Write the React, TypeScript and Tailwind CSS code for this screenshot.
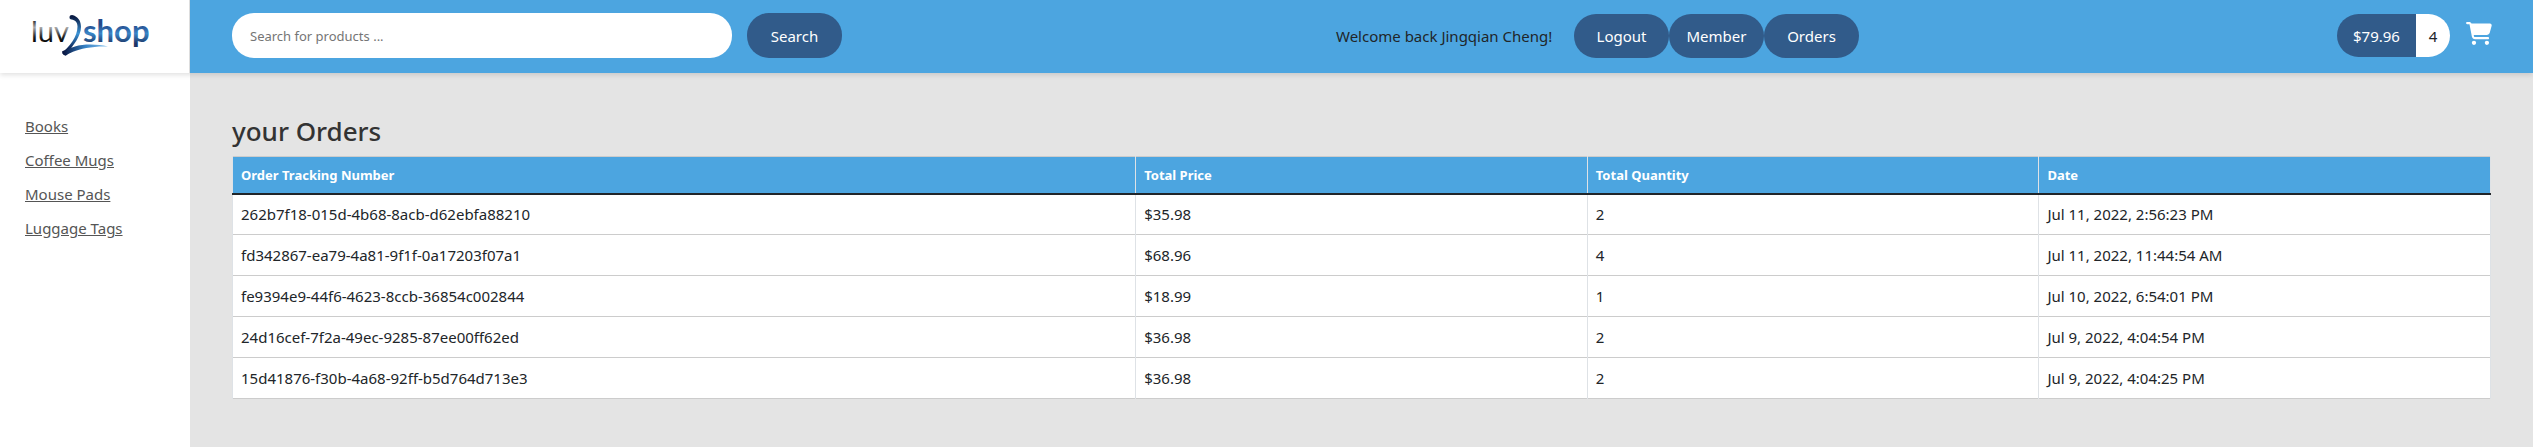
import { FaCartShopping } from "react-icons/fa6";

const categories = ["Books", "Coffee Mugs", "Mouse Pads", "Luggage Tags"];

const orders = [
  { id: "262b7f18-015d-4b68-8acb-d62ebfa88210", price: "$35.98", quantity: 2, date: "Jul 11, 2022, 2:56:23 PM" },
  { id: "fd342867-ea79-4a81-9f1f-0a17203f07a1", price: "$68.96", quantity: 4, date: "Jul 11, 2022, 11:44:54 AM" },
  { id: "fe9394e9-44f6-4623-8ccb-36854c002844", price: "$18.99", quantity: 1, date: "Jul 10, 2022, 6:54:01 PM" },
  { id: "24d16cef-7f2a-49ec-9285-87ee00ff62ed", price: "$36.98", quantity: 2, date: "Jul 9, 2022, 4:04:54 PM" },
  { id: "15d41876-f30b-4a68-92ff-b5d764d713e3", price: "$36.98", quantity: 2, date: "Jul 9, 2022, 4:04:25 PM" },
];

function Logo() {
  return (
    <svg viewBox="-8 0 140 49" className="h-[49px] w-[140px]" role="img" aria-label="luv2shop">
      <defs>
        <linearGradient id="luv" gradientUnits="userSpaceOnUse" x1="0" y1="7" x2="0" y2="31">
          <stop offset="0" stopColor="#111" />
          <stop offset="0.35" stopColor="#aaa" />
          <stop offset="0.75" stopColor="#222" />
          <stop offset="1" stopColor="#000" />
        </linearGradient>
        <linearGradient id="shop" gradientUnits="userSpaceOnUse" x1="0" y1="7" x2="0" y2="36">
          <stop offset="0.2" stopColor="#24498a" />
          <stop offset="0.5" stopColor="#3a86c8" />
          <stop offset="0.85" stopColor="#1d3566" />
        </linearGradient>
        <linearGradient id="two" gradientUnits="userSpaceOnUse" x1="0" y1="3" x2="0" y2="44">
          <stop offset="0.05" stopColor="#0b1c44" />
          <stop offset="0.45" stopColor="#3a93d6" />
          <stop offset="0.85" stopColor="#0a1a4a" />
        </linearGradient>
        <linearGradient id="swoosh" gradientUnits="userSpaceOnUse" x1="29" y1="0" x2="75" y2="0">
          <stop offset="0" stopColor="#06103a" />
          <stop offset="0.5" stopColor="#3580c4" />
          <stop offset="1" stopColor="#8cc6f0" />
        </linearGradient>
      </defs>
      <text x="-2" y="30" fontSize="29" fontFamily="Lato, sans-serif" fontWeight="400" fill="url(#luv)">
        luv
      </text>
      <path
        d="M36.500 5.500C36.500 3 39 2.500 41.500 3.800C46 6 48 10 48 15C48 24 40 34 35 40L31 43L29 41C36 35 44.500 25 44.500 14.500C44.500 10 42 8 38.500 7.500C37 7.300 36.500 6.500 36.500 5.500Z"
        fill="url(#two)"
      />
      <path
        d="M29 39.500C33 37.500 36 36.500 42 34.500C51 31.800 64 32 75 34.500C60 34 48 36.500 40 39.800C37 41 35 42 33 43.500C32 44.500 29.500 42 29 39.500Z"
        fill="url(#swoosh)"
      />
      <text x="50" y="30" fontSize="31" fontFamily="Lato, sans-serif" fontWeight="700" fill="url(#shop)">
        shop
      </text>
    </svg>
  );
}

const pill =
  "flex h-[44px] w-[95px] items-center justify-center rounded-[22px] bg-[#315b8a] text-[15px] text-white no-underline";

export default function App() {
  return (
    <div className="flex min-h-screen flex-col bg-[#e4e4e4] font-['Noto_Sans','Open_Sans',sans-serif] text-[15px] leading-6 text-[#212529]">
      <header className="relative flex h-[73px] shadow-[0_2px_5px_rgba(0,0,0,0.12)]">
        <a
          href="#home"
          className="flex w-[190px] shrink-0 items-center justify-center border-r border-[#ddd] bg-white"
        >
          <Logo />
        </a>
        <div className="flex flex-1 items-center justify-between bg-[#4ca5e0] pr-[41px] pb-0.5 pl-[42px]">
          <form className="flex items-center gap-[15px]" onSubmit={(e) => e.preventDefault()}>
            <input
              type="text"
              aria-label="Search for products"
              placeholder="Search for products ..."
              className="h-[45px] w-[500px] rounded-[22px] bg-white px-[18px] text-[13px] outline-none placeholder:text-[#757575]"
            />
            <button type="submit" className="h-[45px] w-[95px] rounded-[22px] bg-[#315b8a] text-[15px] text-white">
              Search
            </button>
          </form>
          <div className="flex items-center pl-4">
            <span className="w-[238px]">Welcome back Jingqian Cheng!</span>
            <button type="button" className={pill}>
              Logout
            </button>
            <a href="#members" className={pill}>
              Member
            </a>
            <a href="#orders" className={pill}>
              Orders
            </a>
          </div>
          <a href="#cart" aria-label="Shopping cart" className="flex items-center gap-4">
            <span className="flex h-[43px] items-center overflow-hidden rounded-[22px]">
              <span className="flex h-full w-[79px] items-center justify-center bg-[#315b8a] text-white">$79.96</span>
              <span className="flex h-full w-[34px] items-center justify-center bg-white">4</span>
            </span>
            <FaCartShopping className="mb-1 h-[23px] w-[26px] text-white" />
          </a>
        </div>
      </header>

      <div className="flex flex-1">
        <nav aria-label="Categories" className="w-[190px] shrink-0 bg-white pt-[41px] pl-[25px]">
          <ul>
            {categories.map((name) => (
              <li key={name} className="mb-[10px]">
                <a href="#category" className="text-[#555] underline">
                  {name}
                </a>
              </li>
            ))}
          </ul>
        </nav>

        <main className="flex-1 pt-[41px] pr-[42px] pl-[42px]">
          <h2 className="mb-2 text-[26px] leading-[34px] font-medium text-[#333]">your Orders</h2>
          <table className="w-full table-fixed border-collapse bg-white">
            <thead>
              <tr className="h-[37px] border-t border-b-2 border-t-[#ccc] border-b-[#212529] bg-[#4ca5e0] text-left text-[13px] text-white">
                <th className="w-2/5 border-x border-x-[#dee2e6] px-2">Order Tracking Number</th>
                <th className="w-1/5 border-x border-x-[#dee2e6] px-2">Total Price</th>
                <th className="w-1/5 border-x border-x-[#dee2e6] px-2">Total Quantity</th>
                <th className="w-1/5 border-x border-x-[#dee2e6] px-2">Date</th>
              </tr>
            </thead>
            <tbody>
              {orders.map((order) => (
                <tr key={order.id} className="h-[41px] border-b border-b-[#ccc]">
                  <td className="border-x border-x-[#dee2e6] px-2">{order.id}</td>
                  <td className="border-x border-x-[#dee2e6] px-2">{order.price}</td>
                  <td className="border-x border-x-[#dee2e6] px-2">{order.quantity}</td>
                  <td className="border-x border-x-[#dee2e6] px-2">{order.date}</td>
                </tr>
              ))}
            </tbody>
          </table>
        </main>
      </div>
    </div>
  );
}
